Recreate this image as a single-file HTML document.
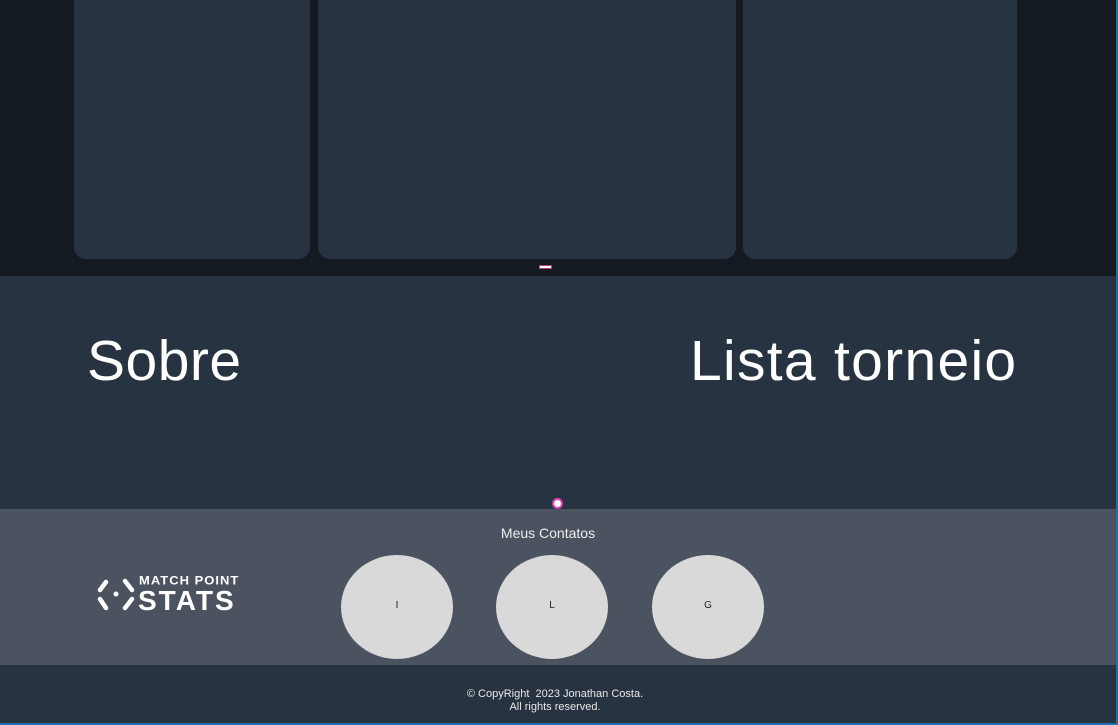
<!DOCTYPE html>
<html><head><meta charset="utf-8"><style>
html,body{margin:0;padding:0;width:1118px;height:725px;overflow:hidden;background:#283341;font-family:"Liberation Sans",sans-serif;}
.top{position:absolute;left:0;top:0;width:1116px;height:276px;background:#141a22;}
.card{position:absolute;top:-10px;height:269px;background:#283341;border-radius:12px;}
.mid{position:absolute;left:0;top:276px;width:1116px;height:233px;background:#283341;}
.big{position:absolute;top:328px;color:#fff;font-size:57px;letter-spacing:0.5px;}
.foot{position:absolute;left:0;top:509px;width:1116px;height:156px;background:#4b5260;}
.circ{position:absolute;top:555px;width:112px;height:104px;border-radius:50%;background:#d9d9d9;font-size:10px;color:#222;display:flex;align-items:center;justify-content:center;padding-bottom:3px;box-sizing:border-box;}
.copy{position:absolute;left:0;width:1110px;text-align:center;color:#e8e8e8;font-size:11px;}
.edge{position:absolute;right:0;top:0;width:2px;height:725px;background:#1e6fb0;}
.edgeb{position:absolute;left:0;bottom:0;width:1118px;height:2px;background:#1e6fb0;}
</style></head><body>
<div class="top">
 <div class="card" style="left:74px;width:236px"></div>
 <div class="card" style="left:318px;width:418px"></div>
 <div class="card" style="left:743px;width:274px"></div>
 <div style="position:absolute;left:539px;top:265px;width:13px;height:4px;background:#fff;border:1px solid #b0407a;box-sizing:border-box"></div>
</div>
<div class="mid"></div>
<div class="big" style="left:87px">Sobre</div>
<div class="big" style="left:690px;letter-spacing:1.3px">Lista torneio</div>
<div style="position:absolute;left:552px;top:498px;width:7px;height:7px;border:2px solid #e040b0;border-radius:50%;background:#fff"></div>
<div class="foot">
 <div style="position:absolute;left:0;width:1096px;top:16px;text-align:center;color:#eee;font-size:14px">Meus Contatos</div>
 <svg style="position:absolute;left:97px;top:68px" width="40" height="36" viewBox="0 0 40 36">
  <g stroke="#fff" stroke-width="4.5" stroke-linecap="round" fill="none">
   <path d="M9 5 L3 13"/><path d="M3 22 L9 31"/><path d="M28 4 L35 13"/><path d="M35 22 L28 31"/>
  </g><circle cx="19" cy="17" r="2.5" fill="#fff"/>
 </svg>
 <div style="position:absolute;left:139px;top:64px;color:#fff;font-weight:bold;font-size:13px;letter-spacing:1px;transform:scaleY(0.9)">MATCH POINT</div>
 <div style="position:absolute;left:138px;top:77px;color:#fff;font-weight:bold;font-size:28px;letter-spacing:2px;line-height:30px;">STATS</div>
</div>
<div class="circ" style="left:341px">I</div>
<div class="circ" style="left:496px">L</div>
<div class="circ" style="left:652px">G</div>
<div class="copy" style="top:688px">© CopyRight&nbsp; 2023 Jonathan Costa.</div>
<div class="copy" style="top:701px">All rights reserved.</div>
<div class="edge"></div><div class="edgeb"></div>
</body></html>
